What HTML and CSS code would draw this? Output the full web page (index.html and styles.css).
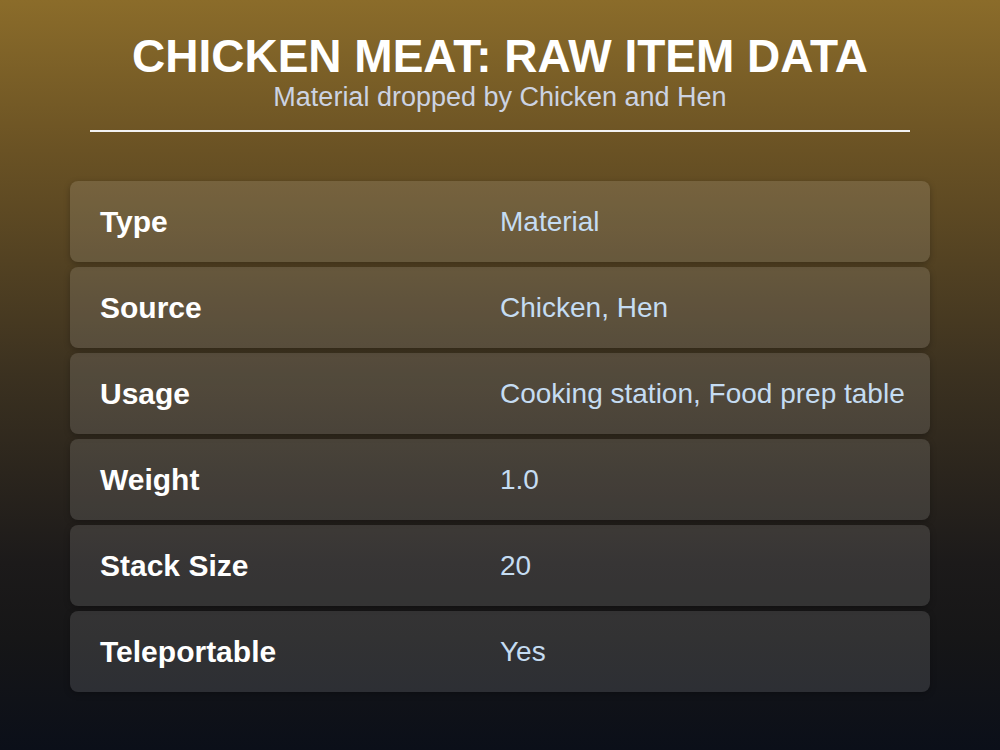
FILE: index.html
```html
<!DOCTYPE html>
<html lang="en">
<head>
  <meta charset="UTF-8" />
  <title>Chicken Meat: Raw Item Data</title>
  <link rel="stylesheet" href="styles.css">
</head>
<body>
  <div class="page">
    <header>
      <h1>CHICKEN MEAT: RAW ITEM DATA</h1>
      <p class="subtitle">Material dropped by Chicken and Hen</p>
    </header>

    <div class="stats">
      <div class="row"><span class="label">Type</span><span class="value">Material</span></div>
      <div class="row"><span class="label">Source</span><span class="value">Chicken, Hen</span></div>
      <div class="row"><span class="label">Usage</span><span class="value">Cooking station, Food prep table</span></div>
      <div class="row"><span class="label">Weight</span><span class="value">1.0</span></div>
      <div class="row"><span class="label">Stack Size</span><span class="value">20</span></div>
      <div class="row"><span class="label">Teleportable</span><span class="value">Yes</span></div>
    </div>
  </div>
</body>
</html>
```

FILE: styles.css
```css
html, body {
  margin: 0;
  height: 100%;
}
body {
  font-family: 'Liberation Sans', Arial, sans-serif;
  background: linear-gradient(180deg, #8b6c2a 0%, #6a5224 20%, #3b3120 50%, #1c1a1a 75%, #161617 85%, #0b0f19 100%);
  color: white;
  overflow: hidden;
}
.page {
  width: 860px;
  margin: 0 auto;
  padding-top: 30px;
}
header {
  margin: 0 20px;
  text-align: center;
  border-bottom: 2px solid #f2f2f2;
  padding-bottom: 18px;
}
h1 {
  margin: 0;
  font-size: 46px;
  line-height: 52px;
  font-weight: bold;
}
.subtitle {
  margin: 0;
  font-size: 27px;
  line-height: 30px;
  color: #ccd3e2;
}
.stats {
  margin-top: 49px;
  display: flex;
  flex-direction: column;
  gap: 5px;
}
.row {
  display: grid;
  grid-template-columns: 400px 1fr;
  align-items: center;
  height: 81px;
  padding: 0 30px;
  border-radius: 8px;
  background-color: rgba(255, 255, 255, 0.12);
  box-shadow: 0 2px 6px rgba(0, 0, 0, 0.25);
}
.label {
  font-weight: bold;
  font-size: 30px;
}
.value {
  font-size: 28px;
  color: #c5dcf2;
  white-space: nowrap;
}
```
